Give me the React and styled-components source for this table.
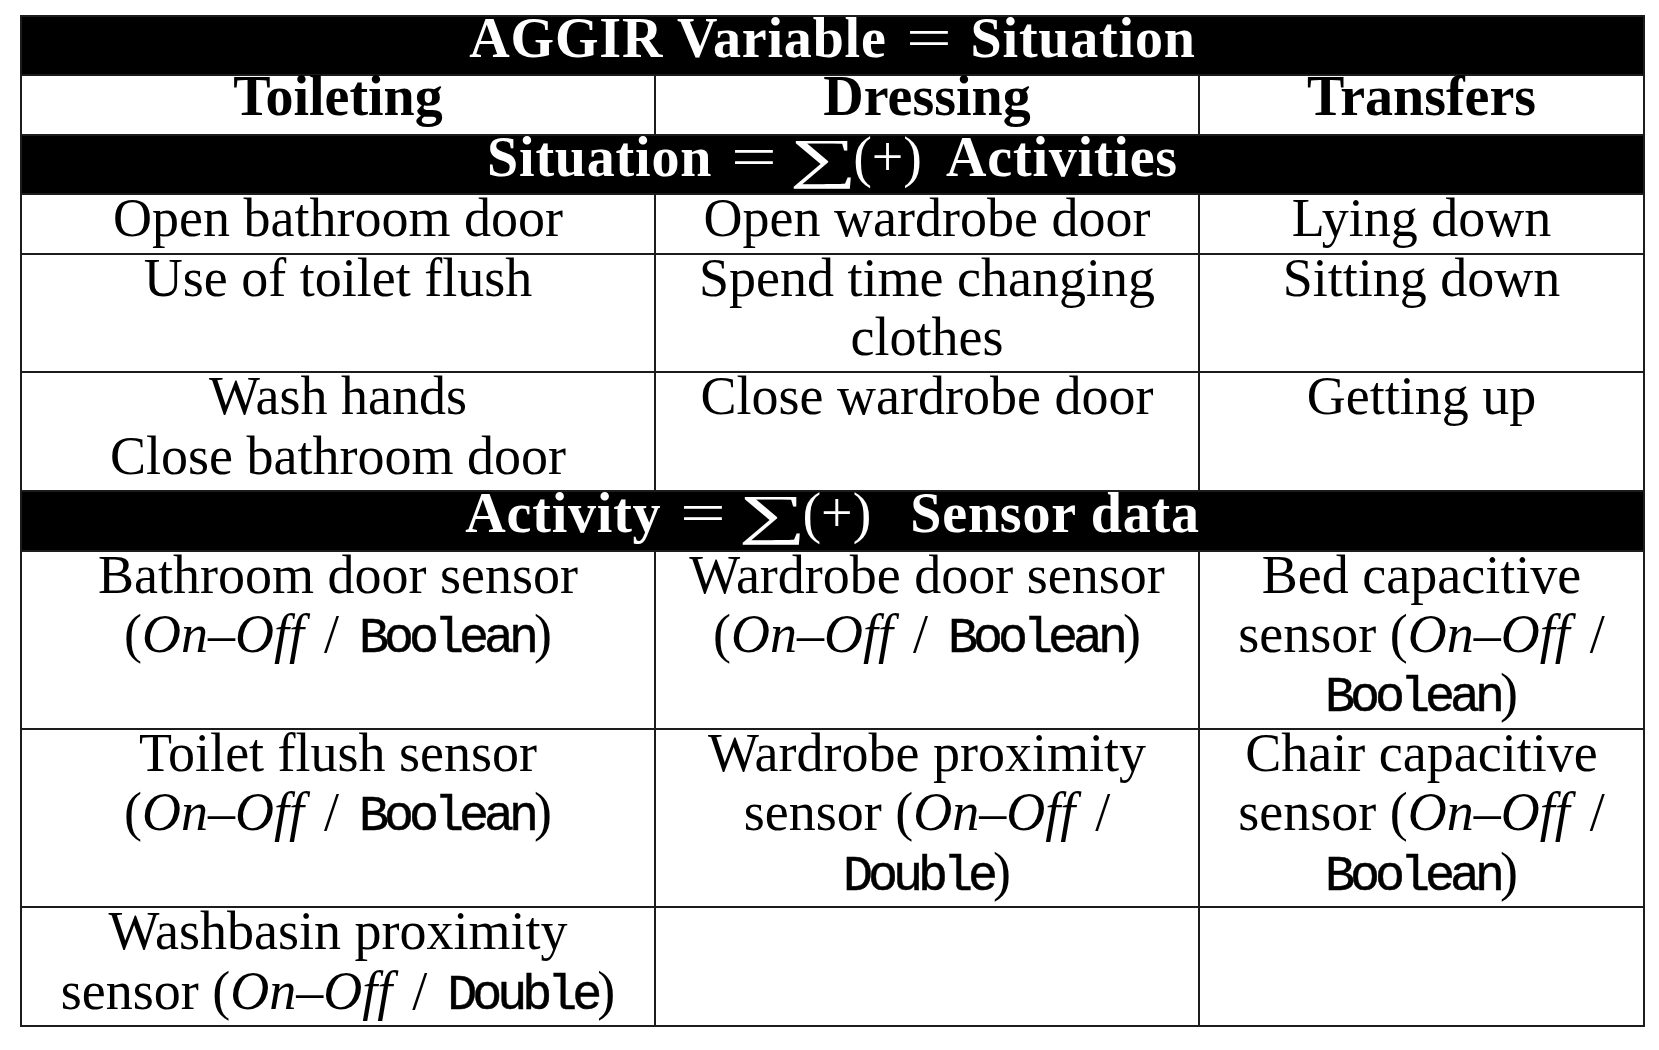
import React from "react";
import styled, { createGlobalStyle } from "styled-components";

const GlobalStyle = createGlobalStyle`
  html, body {
    margin: 0;
    padding: 0;
    background: #ffffff;
  }
  body {
    font-family: "Liberation Serif", "DejaVu Serif", serif;
    color: #000;
  }
`;

// a line is a list of parts: plain strings or { t, kind }
const open = [
  { t: "(", kind: "math" },
  { t: "On–Off", kind: "em" },
];
const sensor = (type) => [...open, { t: "/", kind: "slash" }, { t: type, kind: "mono" }, { t: ")", kind: "math" }];
const tail = (type) => [{ t: type, kind: "mono" }, { t: ")", kind: "math" }];
const wrapped = ["sensor ", ...open, { t: "/", kind: "slash", end: true }];

const rows = [
  { kind: "banner", id: "aggir" },
  { kind: "heads", cells: ["Toileting", "Dressing", "Transfers"] },
  { kind: "banner", id: "situation" },
  { kind: "body", cells: [[["Open bathroom door"]], [["Open wardrobe door"]], [["Lying down"]]] },
  { kind: "body", cells: [[["Use of toilet flush"]], [["Spend time changing"], ["clothes"]], [["Sitting down"]]] },
  { kind: "body", cells: [[["Wash hands"], ["Close bathroom door"]], [["Close wardrobe door"]], [["Getting up"]]] },
  { kind: "banner", id: "activity" },
  {
    kind: "body",
    cells: [
      [["Bathroom door sensor"], sensor("Boolean")],
      [["Wardrobe door sensor"], sensor("Boolean")],
      [["Bed capacitive"], wrapped, tail("Boolean")],
    ],
  },
  {
    kind: "body",
    cells: [
      [["Toilet flush sensor"], sensor("Boolean")],
      [["Wardrobe proximity"], wrapped, tail("Double")],
      [["Chair capacitive"], wrapped, tail("Boolean")],
    ],
  },
  { kind: "body", cells: [[["Washbasin proximity"], ["sensor ", ...sensor("Double")]], [], []] },
];

const Page = styled.div`
  padding: 15px 0 0 20px;
`;

const Table = styled.table`
  border-collapse: collapse;
  table-layout: fixed;
  width: 1623px;
`;

const Col = styled.col`
  width: ${(p) => p.w}px;
`;

const Cell = styled.td`
  border: 2px solid #1c1c1c;
  padding: 0;
  vertical-align: top;
  text-align: center;
  font-size: 54px;
  line-height: 59.4px;
  background: ${(p) => (p.dark ? "#000" : "#fff")};
  color: ${(p) => (p.dark ? "#fff" : "#000")};
  white-space: nowrap;
`;

const HeadCell = styled(Cell)`
  font-size: 56px;
  font-weight: 700;
  letter-spacing: ${(p) => p.track || 0}px;
`;

// pulls the text up a little and trims the row, like the tabular struts
const Lines = styled.div`
  margin: ${(p) => -p.lift}px 0 ${(p) => p.lift - 2}px;
`;

const Line = styled.div`
  white-space: nowrap;
`;

const Em = styled.span`
  font-style: italic;
`;

const Mono = styled.span`
  font-family: "Liberation Mono", "Nimbus Mono PS", "FreeMono", "DejaVu Sans Mono", monospace;
  font-weight: 400;
  font-size: 50px;
  line-height: 0;
  letter-spacing: -5px;
  -webkit-text-stroke: 0.5px #000;
`;

const Slash = styled.span`
  display: inline-block;
  line-height: 0;
  margin: 0 ${(p) => (p.end ? 0 : 20)}px 0 20px;
`;

const Eq = styled.span`
  display: inline-block;
  width: 36px;
  margin: 0 24px;
  line-height: 0;
  font-weight: 400;
  letter-spacing: 0;
  transform: scaleX(1.45);
`;

const Sum = styled.span`
  display: inline-block;
  width: 55px;
  margin-right: 2px;
  line-height: 0;
  font-weight: 400;
  font-size: 56px;
  letter-spacing: 0;
  transform: translateY(1px) scale(1.7, 0.98);
`;

const Plus = styled.span`
  display: inline-block;
  margin-right: ${(p) => p.gap}px;
  line-height: 0;
  font-weight: 400;
  letter-spacing: 0;
`;

const bannerText = {
  aggir: (
    <>
      AGGIR Variable
      <Eq>=</Eq>
      Situation
    </>
  ),
  situation: (
    <>
      Situation
      <Eq>=</Eq>
      <Sum>∑</Sum>
      <Plus gap={24}>(+)</Plus>
      Activities
    </>
  ),
  activity: (
    <>
      Activity
      <Eq>=</Eq>
      <Sum>∑</Sum>
      <Plus gap={39}>(+)</Plus>
      Sensor data
    </>
  ),
};

const Part = ({ part }) => {
  if (typeof part === "string") return part;
  if (part.kind === "em") return <Em>{part.t}</Em>;
  if (part.kind === "mono") return <Mono>{part.t}</Mono>;
  if (part.kind === "slash") return <Slash end={part.end}>/</Slash>;
  return part.t;
};

export default function App() {
  return (
    <Page>
      <GlobalStyle />
      <Table>
        <colgroup>
          <Col w={634} />
          <Col w={544} />
          <Col w={445} />
        </colgroup>
        <tbody>
          {rows.map((row, i) => {
            if (row.kind === "banner")
              return (
                <tr key={i}>
                  <HeadCell colSpan={3} dark track={0.8}>
                    <Lines lift={8}>{bannerText[row.id]}</Lines>
                  </HeadCell>
                </tr>
              );
            if (row.kind === "heads")
              return (
                <tr key={i}>
                  {row.cells.map((c) => (
                    <HeadCell key={c}>
                      <Lines lift={9}>{c}</Lines>
                    </HeadCell>
                  ))}
                </tr>
              );
            return (
              <tr key={i}>
                {row.cells.map((cell, j) => (
                  <Cell key={j}>
                    <Lines lift={6}>
                      {cell.map((line, k) => (
                        <Line key={k}>
                          {line.map((p, m) => (
                            <Part key={m} part={p} />
                          ))}
                        </Line>
                      ))}
                    </Lines>
                  </Cell>
                ))}
              </tr>
            );
          })}
        </tbody>
      </Table>
    </Page>
  );
}
